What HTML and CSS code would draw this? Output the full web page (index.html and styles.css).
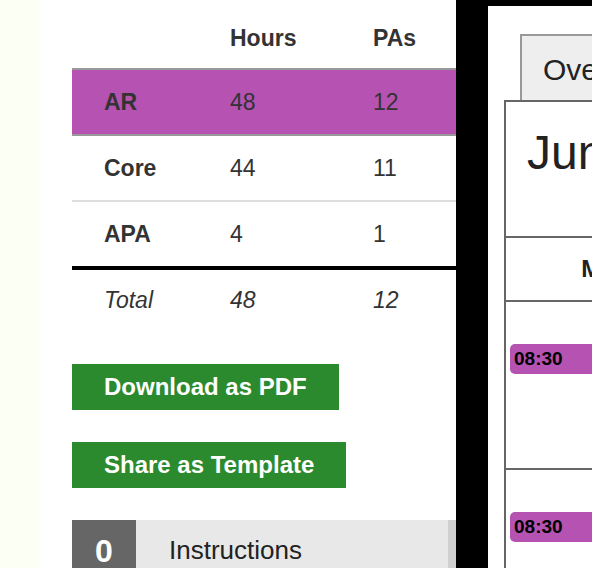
FILE: index.html
```html
<!DOCTYPE html>
<html>
<head>
<meta charset="utf-8">
<link rel="stylesheet" href="styles.css">
</head>
<body>
<div class="rail"></div>
<div class="main">
  <div class="summary">
    <div class="row head">
      <div></div><div>Hours</div><div>PAs</div>
    </div>
    <div class="row ar">
      <div class="label">AR</div><div>48</div><div>12</div>
    </div>
    <div class="row">
      <div class="label">Core</div><div>44</div><div>11</div>
    </div>
    <div class="row apa">
      <div class="label">APA</div><div>4</div><div>1</div>
    </div>
    <div class="row total">
      <div>Total</div><div>48</div><div>12</div>
    </div>
  </div>
  <div class="actions">
    <button class="btn">Download as PDF</button>
    <button class="btn">Share as Template</button>
  </div>
  <div class="panel-bar">
    <div class="count">0</div>
    <div class="bar-label">Instructions</div>
    <div class="bar-end"></div>
  </div>
</div>
<div class="right">
  <div class="tab">Overview</div>
  <div class="calendar">
    <div class="cal-title">June 2019</div>
    <div class="days">
      <div class="day">Mon</div><div class="day">Tue</div>
    </div>
    <div class="slot"><span class="event">08:30</span></div>
    <div class="slot"><span class="event">08:30</span></div>
  </div>
</div>
</body>
</html>
```

FILE: styles.css
```css
* { box-sizing: border-box; }
html, body { margin: 0; height: 568px; overflow: hidden; }
body {
  display: flex;
  background: #fcfff4;
  font-family: "Liberation Sans", Arial, sans-serif;
  color: #333;
}
.rail { width: 40px; flex: none; }
.main {
  width: 416px;
  flex: none;
  background: #fff;
  padding: 8px 0 0 32px;
}
.summary { width: 384px; }
.row {
  display: grid;
  grid-template-columns: 126px 143px 115px;
  height: 64px;
  align-items: center;
  font-size: 23px;
  box-sizing: content-box;
}
.row > div { padding-left: 32px; }
.row.head { height: 60px; font-weight: bold; }
.row.ar {
  background: #b552b2;
  border-top: 2px solid #999;
  border-bottom: 2px solid #999;
}
.row .label { font-weight: bold; }
.row.apa { border-top: 2px solid #ddd; }
.row.total { border-top: 4px solid #000; font-style: italic; padding-bottom: 0; }
.row.total > div { margin-top: -3px; }
.actions {
  display: flex;
  flex-direction: column;
  align-items: flex-start;
  gap: 32px;
  margin-top: 30px;
}
.btn {
  height: 46px;
  padding: 0 32px;
  border: none;
  background: #2b8a2e;
  color: #fff;
  font-family: "Liberation Sans", Arial, sans-serif;
  font-weight: bold;
  font-size: 24px;
}
.panel-bar {
  display: flex;
  height: 56px;
  margin-top: 32px;
  width: 384px;
  background: #e8e8e8;
}
.count {
  width: 64px;
  background: #666;
  color: #fff;
  font-weight: bold;
  font-size: 32px;
  text-align: center;
  padding-top: 13px;
}
.bar-label {
  flex: 1;
  padding: 15px 0 0 33px;
  font-size: 26px;
  color: #222;
}
.bar-end { width: 8px; background: #d0d0d0; }
.right {
  flex: 1;
  min-width: 0;
  background: #fff;
  border-left: 32px solid #000;
  border-top: 6px solid #000;
  padding: 28px 0 0 16px;
  overflow: hidden;
  color: #222;
}
.tab {
  margin-left: 16px;
  width: 200px;
  height: 66px;
  border: 2px solid #999;
  border-bottom: none;
  background: #eee;
  font-size: 30px;
  padding: 17px 0 0 21px;
}
.calendar {
  width: 420px;
  border-top: 2px solid #666;
  border-left: 2px solid #666;
}
.cal-title {
  height: 136px;
  border-bottom: 2px solid #666;
  font-size: 48px;
  padding: 23px 0 0 21px;
}
.days {
  display: grid;
  grid-template-columns: 200px 200px;
  height: 64px;
  align-items: center;
  border-bottom: 2px solid #666;
}
.day { text-align: center; font-weight: bold; font-size: 24px; }
.slot {
  height: 168px;
  border-bottom: 2px solid #666;
  padding: 42px 0 0 4px;
}
.event {
  display: block;
  width: 190px;
  height: 30px;
  border-radius: 5px;
  background: #b552b2;
  color: #000;
  font-weight: bold;
  font-size: 19px;
  padding: 4px 0 0 4px;
}
```
